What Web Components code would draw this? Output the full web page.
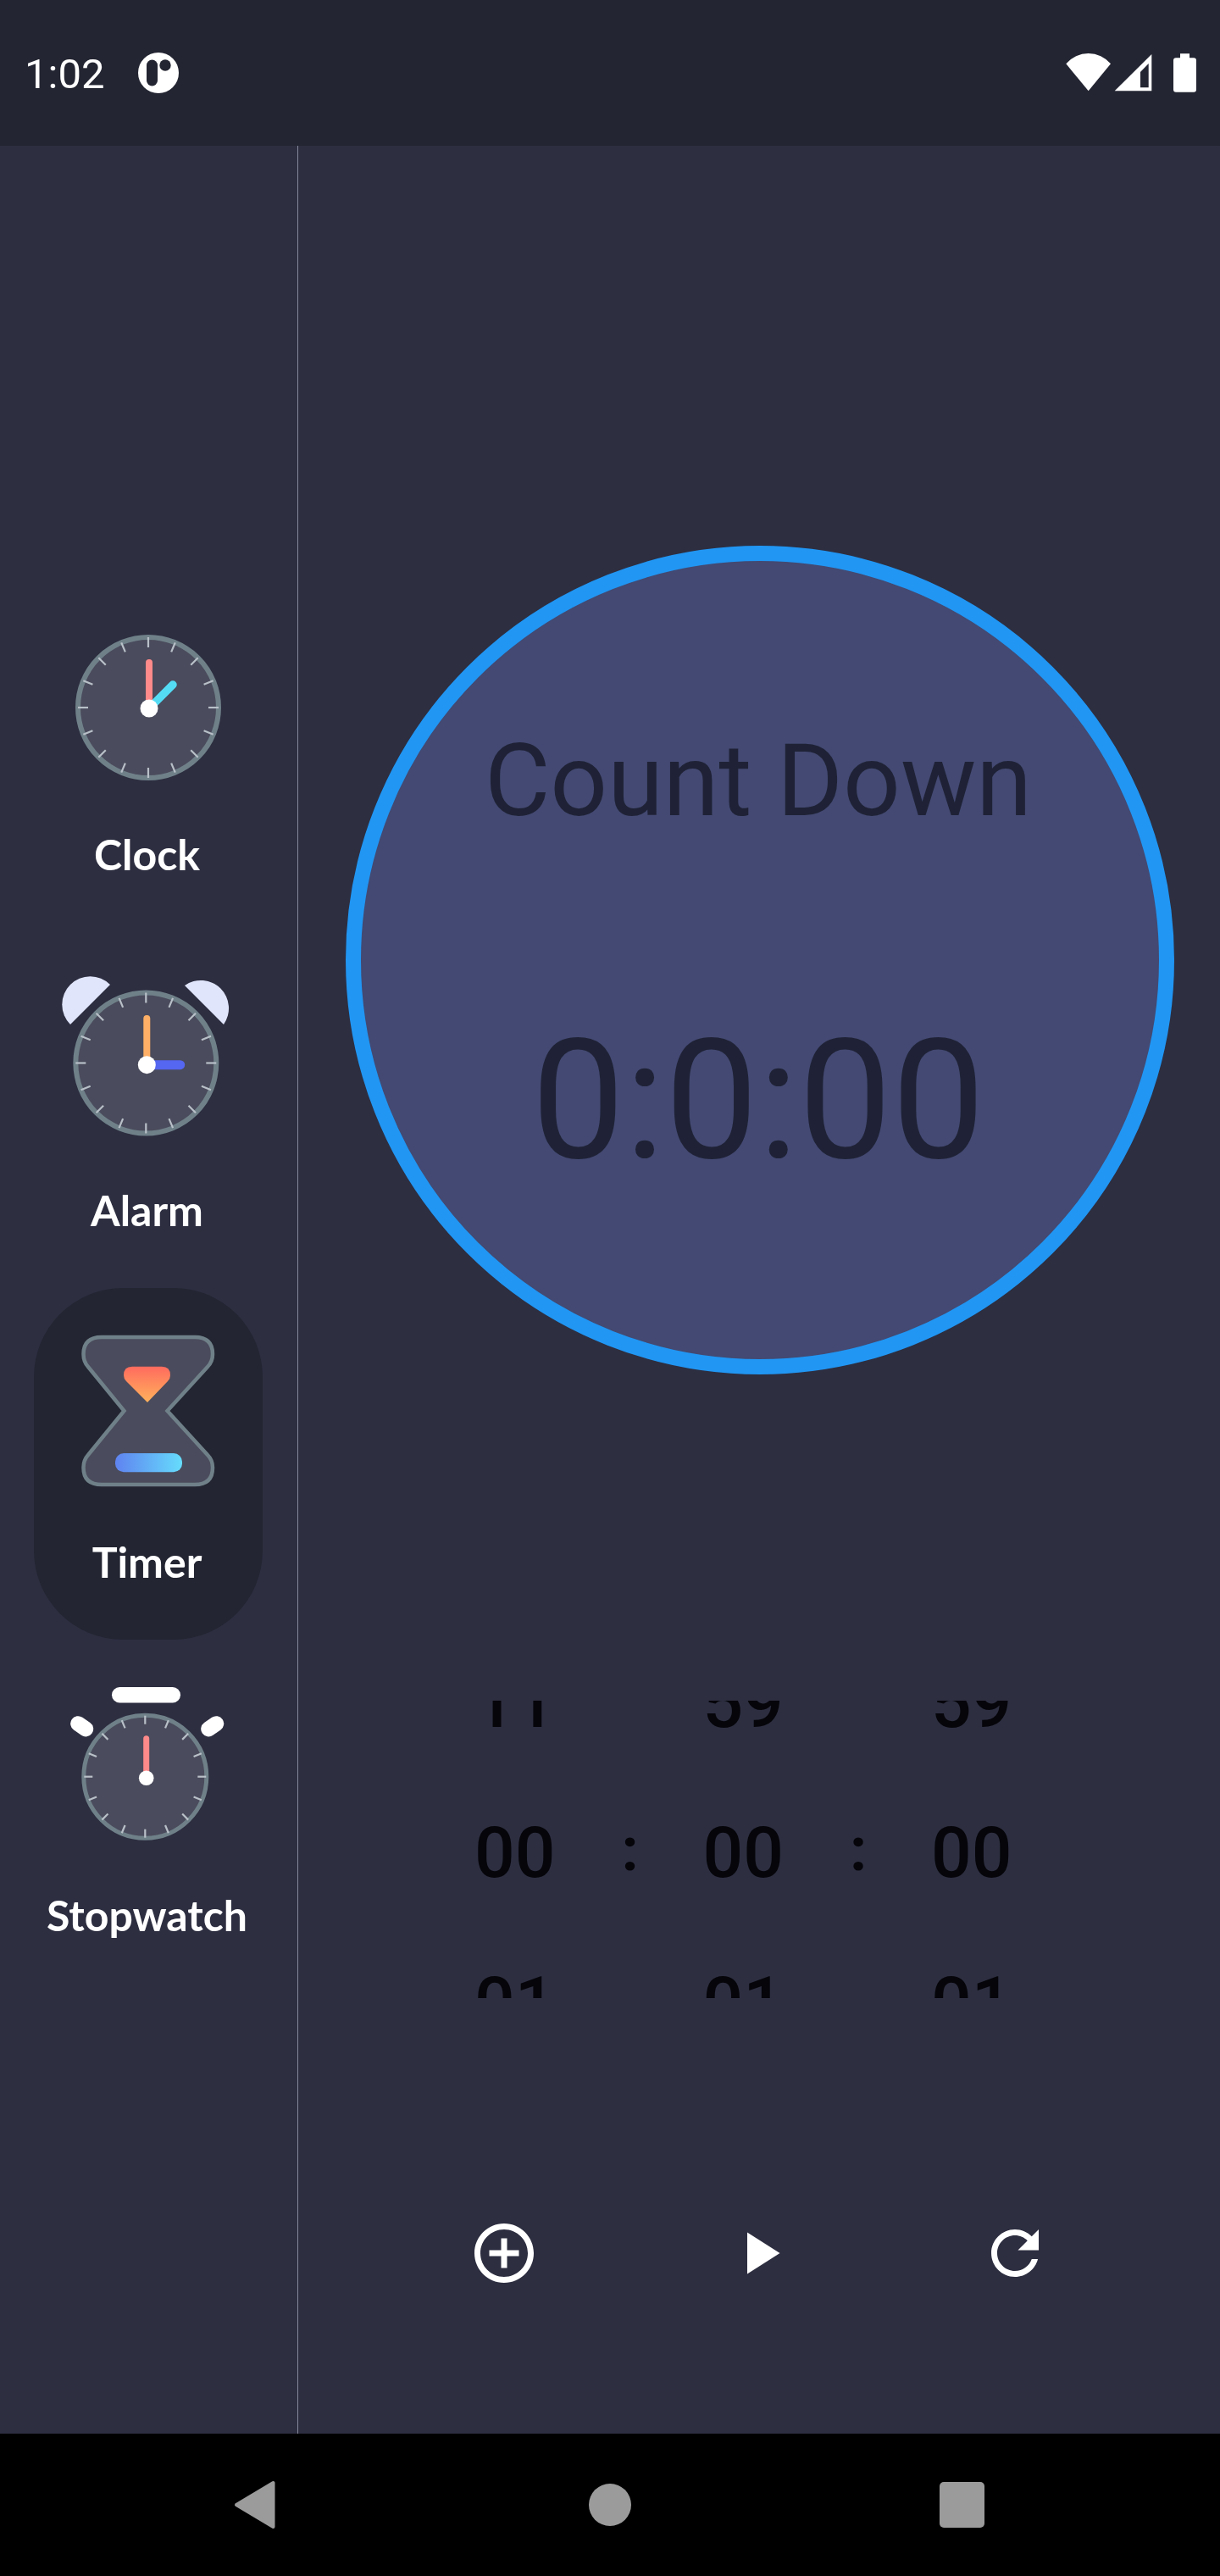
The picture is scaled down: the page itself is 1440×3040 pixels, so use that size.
<!DOCTYPE html>
<html>
<head>
<meta charset="utf-8">
<title>Timer</title>
<style>
    html, body { margin: 0; padding: 0; background: #2d2e40; }
    body { width: 1440px; height: 3040px; font-family: Roboto, sans-serif; display: flex; flex-direction: column; }
</style>
</head>
<body>
<status-bar></status-bar>
<app-shell>
    <side-nav slot="side">
        <nav-item label="Clock" gap="288"><dial-icon kind="clock"></dial-icon></nav-item>
        <nav-item label="Alarm" gap="293"><dial-icon kind="alarm"></dial-icon></nav-item>
        <nav-item label="Timer" gap="293" active><hourglass-icon></hourglass-icon></nav-item>
        <nav-item label="Stopwatch"><dial-icon kind="stopwatch"></dial-icon></nav-item>
    </side-nav>
    <timer-panel slot="main">
        <count-circle title-text="Count Down" time="0:0:00"></count-circle>
        <time-wheel></time-wheel>
        <timer-actions></timer-actions>
    </timer-panel>
</app-shell>
<system-nav></system-nav>

<script>
class StatusBar extends HTMLElement {
    connectedCallback() {
        this.attachShadow({ mode: 'open' });
        this.shadowRoot.innerHTML = `
            <style>
                :host {
                    display: flex;
                    align-items: center;
                    height: 172px;
                    flex: none;
                    background: #232532;
                    color: #fff;
                    padding: 0 25px 0 29px;
                    font: 400 49px/56px Roboto, sans-serif;
                }
                .time { width: 92px; padding-top: 3px; }
                .badge { margin-left: 42px; display: block; }
                .icons { margin-left: auto; display: block; }
            </style>
            <span class="time">1:02</span>
            <svg class="badge" width="48" height="48" viewBox="0 0 48 48">
                <circle cx="24" cy="24" r="24" fill="#fff"/>
                <rect x="10" y="8.500" width="13" height="31" rx="6.500" fill="#232532"/>
                <circle cx="32" cy="15" r="6.700" fill="#232532"/>
            </svg>
            <svg class="icons" width="160" height="52" viewBox="1255 60 160 52" fill="#fff">
                <path d="M1284.700 107.300L1258.300 75.300A34.400 34.400 0 0 1 1311 75.300Z"/>
                <path fill-rule="evenodd" d="M1315.700 107.300L1359.300 64V107.300ZM1346 85V103.300H1355.700V75Z"/>
                <path d="M1393 63.300H1404V68.300H1409A3 3 0 0 1 1412 71.300V105.700A3 3 0 0 1 1409 108.700H1388A3 3 0 0 1 1385 105.700V71.300A3 3 0 0 1 1388 68.300H1393Z"/>
            </svg>
        `;
    }
}
customElements.define('status-bar', StatusBar);

class AppShell extends HTMLElement {
    connectedCallback() {
        this.attachShadow({ mode: 'open' });
        this.shadowRoot.innerHTML = `
            <style>
                :host { display: flex; flex: 1; min-height: 0; background: #2d2e40; }
            </style>
            <slot name="side"></slot>
            <slot name="main"></slot>
        `;
    }
}
customElements.define('app-shell', AppShell);

class SideNav extends HTMLElement {
    connectedCallback() {
        this.attachShadow({ mode: 'open' });
        this.shadowRoot.innerHTML = `
            <style>
                :host {
                    display: flex;
                    flex-direction: column;
                    align-items: flex-start;
                    justify-content: center;
                    width: 311px;
                    flex: none;
                    padding: 0 0 4px 40px;
                    border-right: 1px solid #85879a;
                }
            </style>
            <slot></slot>
        `;
    }
}
customElements.define('side-nav', SideNav);

class NavItem extends HTMLElement {
    connectedCallback() {
        const gap = this.getAttribute('gap') || 295;
        this.attachShadow({ mode: 'open' });
        this.shadowRoot.innerHTML = `
            <style>
                :host {
                    display: block;
                    width: 270px;
                    height: 415px;
                    border-radius: 105px;
                    color: #fff;
                    text-align: center;
                }
                :host([active]) { background: #232532; }
                .icon { height: ${gap}px; }
                .label {
                    font: 700 50px/60px Lato, sans-serif;
                    white-space: nowrap;
                    padding-right: 3px;
                }
            </style>
            <div class="icon"><slot></slot></div>
            <div class="label">${this.getAttribute('label')}</div>
        `;
    }
}
customElements.define('nav-item', NavItem);

// dial positions are taken relative to the top left of the nav item
const DIALS = {
    clock: {
        cx: 135, cy: 145, r: 86, hub: [136, 146, 10.5], tick: 15, ring: 6,
        hands: `<line x1="136" y1="146" x2="136" y2="92" stroke="#ff8a8a" stroke-width="8" stroke-linecap="round"/>
                <line x1="136" y1="146" x2="164" y2="118" stroke="#55dcf5" stroke-width="9.500" stroke-linecap="round"/>`,
        extra: ''
    },
    alarm: {
        cx: 132.3, cy: 149.5, r: 86, hub: [133.3, 151.7, 10.5], tick: 15, ring: 6,
        hands: `<line x1="133.3" y1="151.700" x2="133.3" y2="97" stroke="#ffb066" stroke-width="8" stroke-linecap="round"/>
                <line x1="133.3" y1="151.700" x2="172.700" y2="151.700" stroke="#5566f0" stroke-width="11" stroke-linecap="round"/>`,
        extra: `<path d="M90 57A33 33 0 0 0 43 104Z" fill="#e0e5fb"/>
                <path d="M178 58A33 33 0 0 1 224 104Z" fill="#e0e5fb"/>`
    },
    stopwatch: {
        cx: 131.3, cy: 161.7, r: 75, hub: [132.7, 163.3, 8.8], tick: 13, ring: 5,
        hands: `<line x1="132.700" y1="163.300" x2="132.700" y2="116.800" stroke="#ff8a8a" stroke-width="7" stroke-linecap="round"/>`,
        extra: `<rect x="92" y="56" width="81" height="18.500" rx="9.200" fill="#fff"/>
                <rect x="-14.500" y="-9" width="29" height="18" rx="9" fill="#fff" transform="translate(56.700 102.300) rotate(35)"/>
                <rect x="-14.500" y="-9" width="29" height="18" rx="9" fill="#fff" transform="translate(210.700 102.300) rotate(-35)"/>`
    }
};

class DialIcon extends HTMLElement {
    connectedCallback() {
        const d = DIALS[this.getAttribute('kind')];
        let ticks = '';
        for (let i = 0; i < 16; i++) {
            const a = i * Math.PI / 8;
            const s = Math.sin(a), c = Math.cos(a);
            const r1 = d.r - 3, r2 = d.r - d.tick;
            ticks += `<line x1="${d.cx + s * r1}" y1="${d.cy - c * r1}" x2="${d.cx + s * r2}" y2="${d.cy - c * r2}"/>`;
        }
        this.attachShadow({ mode: 'open' });
        this.shadowRoot.innerHTML = `
            <style>
                :host { display: block; }
                svg { display: block; }
            </style>
            <svg width="270" height="285" viewBox="0 0 270 285">
                ${d.extra}
                <circle cx="${d.cx}" cy="${d.cy}" r="${d.r - d.ring / 2}" fill="#4a4b5c" stroke="#6f8089" stroke-width="${d.ring}"/>
                <g stroke="#b9c0c8" stroke-width="2.200">${ticks}</g>
                ${d.hands}
                <circle cx="${d.hub[0]}" cy="${d.hub[1]}" r="${d.hub[2]}" fill="#fff"/>
            </svg>
        `;
    }
}
customElements.define('dial-icon', DialIcon);

class HourglassIcon extends HTMLElement {
    connectedCallback() {
        this.attachShadow({ mode: 'open' });
        this.shadowRoot.innerHTML = `
            <style>
                :host { display: block; }
                svg { display: block; }
            </style>
            <svg width="270" height="285" viewBox="10 10 270 285">
                <defs>
                    <linearGradient id="sand" x1="0" y1="0" x2="0" y2="1">
                        <stop offset="0" stop-color="#ff6b5e"/>
                        <stop offset="1" stop-color="#ffb25c"/>
                    </linearGradient>
                    <linearGradient id="base" x1="0" y1="0" x2="1" y2="0">
                        <stop offset="0" stop-color="#5f83f0"/>
                        <stop offset="1" stop-color="#66dcfc"/>
                    </linearGradient>
                </defs>
                <path d="M90 68H200Q221 68 221 88Q221 97 215 103L167.500 155L215 207Q221 213 221 222Q221 242 200 242H90Q68.500 242 68.500 222Q68.500 213 74 207L116.500 155L74 103Q68.500 97 68.500 88Q68.500 68 90 68Z"
                      fill="#4a4b5c" stroke="#6f8089" stroke-width="4.500"/>
                <path d="M126 102.700H161Q171 102.700 171 113Q171 117 168 120L144 145L119 120Q116 117 116 113Q116 102.700 126 102.700Z" fill="url(#sand)"/>
                <rect x="106" y="205" width="79" height="22.300" rx="10" fill="url(#base)"/>
            </svg>
        `;
    }
}
customElements.define('hourglass-icon', HourglassIcon);

class TimerPanel extends HTMLElement {
    connectedCallback() {
        this.attachShadow({ mode: 'open' });
        this.shadowRoot.innerHTML = `
            <style>
                :host {
                    display: flex;
                    flex-direction: column;
                    flex: 1;
                    min-width: 0;
                    padding-top: 472px;
                }
            </style>
            <slot></slot>
        `;
    }
}
customElements.define('timer-panel', TimerPanel);

class CountCircle extends HTMLElement {
    connectedCallback() {
        this.attachShadow({ mode: 'open' });
        this.shadowRoot.innerHTML = `
            <style>
                :host {
                    display: flex;
                    flex-direction: column;
                    align-items: center;
                    box-sizing: border-box;
                    width: 978px;
                    height: 978px;
                    margin-left: 56px;
                    padding: 190px 4px 0 0;
                    border: 18px solid #2196f3;
                    border-radius: 50%;
                    background: #434972;
                    color: #1f2236;
                    font-family: Roboto, sans-serif;
                }
                .title { font-size: 119px; line-height: 140px; }
                .time { font-size: 196px; line-height: 230px; margin-top: 192px; }
            </style>
            <div class="title">${this.getAttribute('title-text')}</div>
            <div class="time">${this.getAttribute('time')}</div>
        `;
    }
}
customElements.define('count-circle', CountCircle);

class WheelColumn extends HTMLElement {
    connectedCallback() {
        const rows = this.getAttribute('rows').split(',');
        this.attachShadow({ mode: 'open' });
        this.shadowRoot.innerHTML = `
            <style>
                :host {
                    display: flex;
                    flex-direction: column;
                    justify-content: center;
                    align-items: center;
                    box-sizing: border-box;
                    width: 249.500px;
                    height: 351px;
                    padding-top: 8px;
                    overflow: hidden;
                }
                div { flex: none; height: 177px; font: 500 84px/177px Roboto, sans-serif; }
                div:first-child { margin-bottom: -3px; }
            </style>
            ${rows.map(r => `<div>${r}</div>`).join('')}
        `;
    }
}
customElements.define('wheel-column', WheelColumn);

class TimeWheel extends HTMLElement {
    connectedCallback() {
        this.attachShadow({ mode: 'open' });
        this.shadowRoot.innerHTML = `
            <style>
                :host {
                    display: flex;
                    align-items: center;
                    color: #05050a;
                    margin: 385px 0 0 131px;
                }
                .colon {
                    box-sizing: border-box;
                    width: 20px;
                    padding-left: 1px;
                    text-align: center;
                    font: 700 72px/80px Roboto, sans-serif;
                }
            </style>
            <wheel-column rows="11,00,01"></wheel-column>
            <span class="colon">:</span>
            <wheel-column rows="59,00,01"></wheel-column>
            <span class="colon">:</span>
            <wheel-column rows="59,00,01"></wheel-column>
        `;
    }
}
customElements.define('time-wheel', TimeWheel);

class TimerActions extends HTMLElement {
    connectedCallback() {
        this.attachShadow({ mode: 'open' });
        this.shadowRoot.innerHTML = `
            <style>
                :host {
                    display: flex;
                    justify-content: center;
                    gap: 217.500px;
                    margin-top: 259px;
                }
                svg { width: 84px; height: 84px; fill: #fff; display: block; }
            </style>
            <svg viewBox="0 0 24 24"><path d="M13 7h-2v4H7v2h4v4h2v-4h4v-2h-4V7zm-1-5C6.480 2 2 6.480 2 12s4.480 10 10 10 10-4.480 10-10S17.520 2 12 2zm0 18c-4.410 0-8-3.590-8-8s3.590-8 8-8 8 3.590 8 8-3.590 8-8 8z"/></svg>
            <svg viewBox="0 0 24 24"><path d="M8 5v14l11-7z"/></svg>
            <svg viewBox="0 0 24 24"><path d="M17.650 6.350C16.200 4.900 14.210 4 12 4c-4.420 0-7.990 3.580-7.990 8s3.570 8 7.990 8c3.730 0 6.840-2.550 7.730-6h-2.080c-.820 2.330-3.040 4-5.650 4-3.310 0-6-2.690-6-6s2.690-6 6-6c1.660 0 3.140.690 4.220 1.780L13 11h7V4l-2.350 2.350z"/></svg>
        `;
    }
}
customElements.define('timer-actions', TimerActions);

class SystemNav extends HTMLElement {
    connectedCallback() {
        this.attachShadow({ mode: 'open' });
        this.shadowRoot.innerHTML = `
            <style>
                :host {
                    display: flex;
                    align-items: center;
                    flex: none;
                    height: 168px;
                    padding-left: 258px;
                    gap: 336px;
                    background: #000;
                }
                svg { width: 84px; height: 84px; fill: #9b9b9b; display: block; }
            </style>
            <svg viewBox="0 0 84 84"><path d="M64.500 16V68L21 42Z" stroke="#9b9b9b" stroke-width="4" stroke-linejoin="round"/></svg>
            <svg viewBox="0 0 84 84"><circle cx="42" cy="42" r="25"/></svg>
            <svg viewBox="0 0 84 84"><rect x="11" y="15" width="53" height="54" rx="5"/></svg>
        `;
    }
}
customElements.define('system-nav', SystemNav);
</script>
</body>
</html>
